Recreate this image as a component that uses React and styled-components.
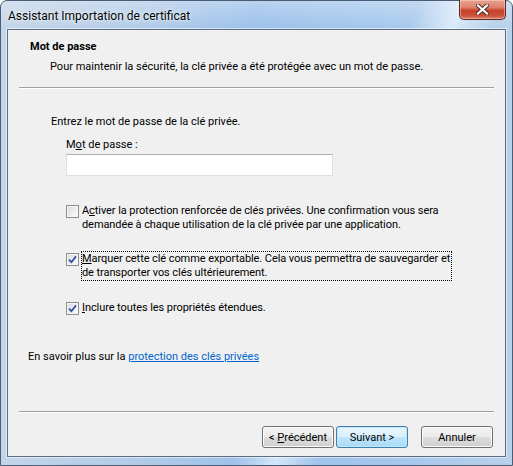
import React from 'react'
import styled, { createGlobalStyle } from 'styled-components'

const GlobalStyle = createGlobalStyle`
  html, body {
    margin: 0;
    padding: 0;
    background: #fff;
  }
  body {
    font-family: Roboto, "Noto Sans", "Liberation Sans", sans-serif;
    font-size: 11px;
    color: #000;
  }
`

const Window = styled.div`
  box-sizing: border-box;
  width: 513px;
  height: 466px;
  display: flex;
  flex-direction: column;
  padding: 0 6px 8px 6px;
  border: 1px solid #4b5d74;
  border-radius: 7px 7px 0 0;
  background:
    linear-gradient(180deg, rgba(255, 255, 255, 0.3) 0px, rgba(255, 255, 255, 0) 28px),
    linear-gradient(112deg, rgba(255, 255, 255, 0) 60%, rgba(232, 243, 255, 0.75) 66%, rgba(255, 255, 255, 0) 72%),
    linear-gradient(90deg, #c3d5e8 0%, #b3cce8 25%, #9bc0ea 50%, #a7c8ec 80%, #b9d1ea 100%);
`

const TitleBar = styled.div`
  height: 28px;
  flex-shrink: 0;
  display: flex;
  align-items: flex-start;
  justify-content: space-between;
`

const Title = styled.div`
  margin: 8px 0 0 1px;
  font-size: 12px;
  line-height: 14px;
  text-shadow: 0 0 6px rgba(255, 255, 255, 0.9), 0 0 2px rgba(255, 255, 255, 0.8);
`

const CloseButton = styled.div`
  box-sizing: border-box;
  width: 47px;
  height: 20px;
  margin-top: -1px;
  display: flex;
  align-items: center;
  justify-content: center;
  border: 1px solid #5b2a20;
  border-top: none;
  border-radius: 0 0 5px 5px;
  background: linear-gradient(180deg, #e9a493 0%, #da7f6a 40%, #c8422a 55%, #ca4d37 80%, #da7f69 100%);
  box-shadow: inset 0 0 0 1px rgba(255, 220, 210, 0.45);
`

const Client = styled.div`
  flex: 1;
  display: flex;
  flex-direction: column;
  background: #f0f0f0;
  border: 1px solid #5d6d81;
  box-shadow: 0 0 0 1px rgba(255, 255, 255, 0.55);
`

const Header = styled.div`
  padding: 10px 0 0 22px;
  line-height: 14px;
`

const HeaderTitle = styled.div`
  font-weight: bold;
`

const HeaderText = styled.div`
  margin-top: 6px;
  padding-left: 20px;
`

const Divider = styled.div`
  margin: ${p => p.$top || 0}px 11px 0;
  border-top: 1px solid #a0a0a0;
  border-bottom: 1px solid #fff;
`

const Body = styled.div`
  padding-left: 43px;
  line-height: 14px;
`

const Intro = styled.div`
  margin-top: 26px;
`

const FieldLabel = styled.div`
  margin: 9px 0 0 15px;
`

const PasswordInput = styled.input`
  display: block;
  box-sizing: border-box;
  width: 267px;
  height: 22px;
  margin: 2px 0 0 15px;
  padding: 0 3px;
  border: 1px solid #dbdfe6;
  border-top-color: #abadb3;
  background: #fff;
  outline: none;
`

const CheckRow = styled.div`
  display: flex;
  align-items: flex-start;
  gap: 3px;
  margin: ${p => p.$top}px 0 0 15px;
`

const Box = styled.span`
  box-sizing: border-box;
  width: 13px;
  height: 13px;
  flex-shrink: 0;
  margin-top: 1px;
  display: flex;
  align-items: center;
  justify-content: center;
  border: 1px solid #8e8f8f;
  background: linear-gradient(135deg, #d6d8db 0%, #eef0f2 60%, #fbfbfb 100%);
  box-shadow: inset 0 0 0 1px #f6f6f6;
  svg {
    display: block;
  }
`

const CheckText = styled.span`
  min-width: 369px;
  white-space: nowrap;
  letter-spacing: -0.08px;
  outline: ${p => (p.$focused ? '1px dotted #000' : 'none')};
`

const LearnMore = styled.div`
  margin-top: 35px;
  padding-left: 20px;
  line-height: 14px;
`

const Link = styled.a`
  color: #0066cc;
  text-decoration: underline;
`

const Spacer = styled.div`
  flex: 1;
`

const Footer = styled.div`
  display: flex;
  justify-content: flex-end;
  padding: 13px 12px 8px;
`

const Button = styled.div`
  box-sizing: border-box;
  width: 72px;
  height: 22px;
  margin-left: ${p => p.$gap || 0}px;
  display: flex;
  align-items: center;
  justify-content: center;
  white-space: pre;
  border: 1px solid ${p => (p.$default ? '#3c7fb1' : '#707070')};
  border-radius: 3px;
  background: ${p =>
    p.$default
      ? 'linear-gradient(180deg, #eaf6fd 0%, #d9f0fc 50%, #bee6fd 50%, #a7d9f5 100%)'
      : 'linear-gradient(180deg, #f2f2f2 0%, #ebebeb 50%, #dddddd 50%, #cfcfcf 100%)'};
  box-shadow: inset 0 0 0 1px ${p => (p.$default ? '#c6e6f8' : '#fcfcfc')};
`

const Checkbox = ({ checked }) => (
  <Box>
    {checked && (
      <svg width="9" height="9" viewBox="0 0 9 9">
        <path d="M1 4.6 L3.4 7.2 L8 1.4" fill="none" stroke="#2f52a6" strokeWidth="1.8" />
      </svg>
    )}
  </Box>
)

export default function App() {
  return (
    <>
      <GlobalStyle />
      <Window>
        <TitleBar>
          <Title>Assistant Importation de certificat</Title>
          <CloseButton>
            <svg width="13" height="11" viewBox="0 0 13 11">
              <path d="M2 1.5 L11 9.5 M11 1.5 L2 9.5" stroke="#4a2a24" strokeWidth="4" strokeLinecap="square" />
              <path d="M2 1.5 L11 9.5 M11 1.5 L2 9.5" stroke="#fff" strokeWidth="2.2" strokeLinecap="square" />
            </svg>
          </CloseButton>
        </TitleBar>
        <Client>
          <Header>
            <HeaderTitle>Mot de passe</HeaderTitle>
            <HeaderText>Pour maintenir la sécurité, la clé privée a été protégée avec un mot de passe.</HeaderText>
          </Header>
          <Divider $top={13} />
          <Body>
            <Intro>Entrez le mot de passe de la clé privée.</Intro>
            <FieldLabel>M<u>o</u>t de passe :</FieldLabel>
            <PasswordInput type="password" />
            <CheckRow $top={28}>
              <Checkbox />
              <CheckText>
                A<u>c</u>tiver la protection renforcée de clés privées. Une confirmation vous sera
                <br />
                demandée à chaque utilisation de la clé privée par une application.
              </CheckText>
            </CheckRow>
            <CheckRow $top={20}>
              <Checkbox checked />
              <CheckText $focused>
                <u>M</u>arquer cette clé comme exportable. Cela vous permettra de sauvegarder et
                <br />
                de transporter vos clés ultérieurement.
              </CheckText>
            </CheckRow>
            <CheckRow $top={21}>
              <Checkbox checked />
              <CheckText>
                <u>I</u>nclure toutes les propriétés étendues.
              </CheckText>
            </CheckRow>
          </Body>
          <LearnMore>
            En savoir plus sur la <Link href="#">protection des clés privées</Link>
          </LearnMore>
          <Spacer />
          <Divider />
          <Footer>
            <Button>
              <span>&lt; <u>P</u>récédent</span>
            </Button>
            <Button $default $gap={2}>Suivant &gt;</Button>
            <Button $gap={13}>Annuler</Button>
          </Footer>
        </Client>
      </Window>
    </>
  )
}
